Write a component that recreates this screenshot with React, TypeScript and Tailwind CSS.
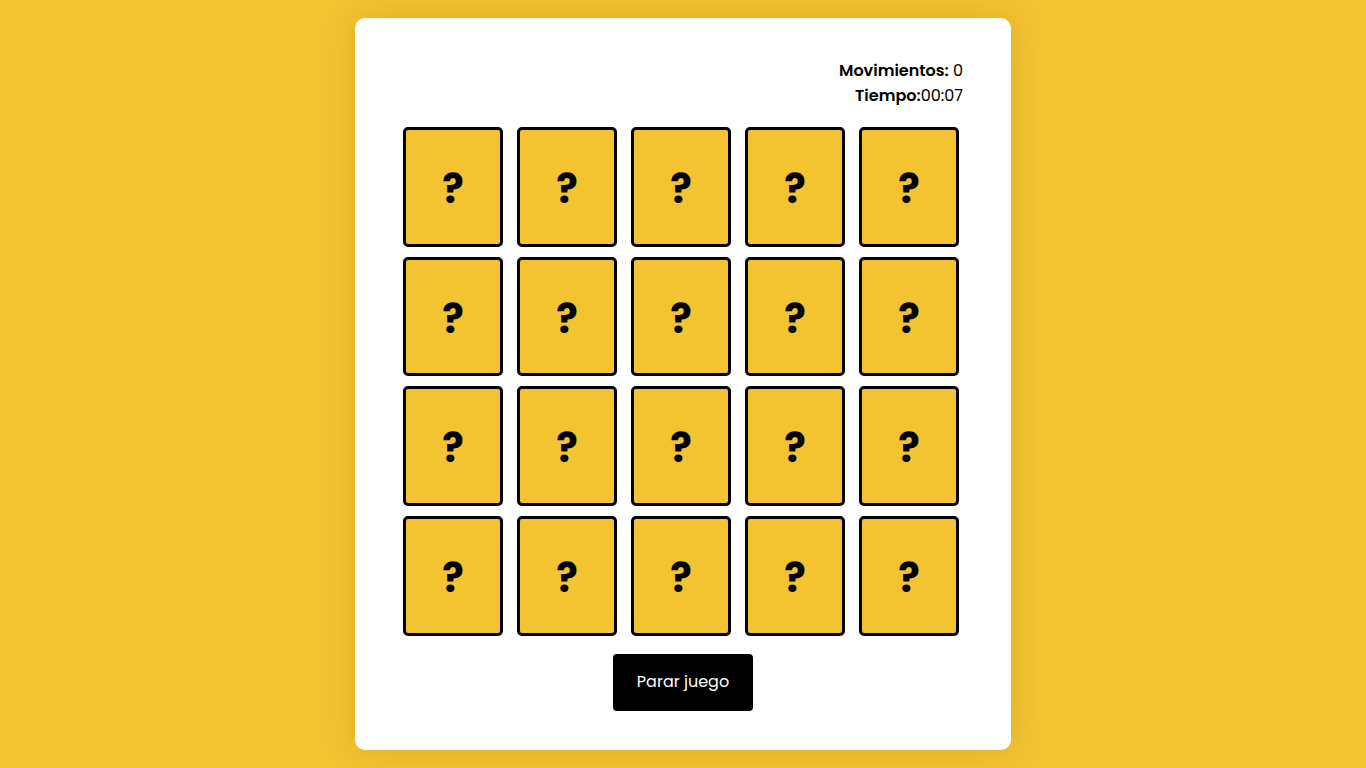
import { useState } from "react";

const cards = Array.from({ length: 20 }, (_, i) => i);

export default function App() {
  const [moves] = useState(0);
  const [time] = useState("00:07");

  return (
    <div className="min-h-screen w-full bg-[#f3c331] flex items-center justify-center font-['Poppins','Noto_Sans',sans-serif]">
      <div className="w-[656px] h-[732px] bg-white rounded-[10px] shadow-[0_0_30px_rgba(150,110,0,0.25)] px-12 pt-[40px] pb-[39px] flex flex-col">
        {/* ---- Stats ---- */}
        <div className="flex flex-col items-end text-[16px] leading-[25px] text-black">
          <p>
            <span className="font-semibold">Movimientos:</span> {moves}
          </p>
          <p>
            <span className="font-semibold">Tiempo:</span>
            {time}
          </p>
        </div>

        <div className="mt-[19px] grid grid-cols-[repeat(5,100px)] grid-rows-[repeat(4,119.7px)] gap-x-[14px] gap-y-[10px]">
          {cards.map((c) => (
            <div
              key={c}
              className="bg-[#f3c331] border-[3px] border-black rounded-[5px] flex items-center justify-center"
            >
              <span className="text-[40px] font-bold leading-none text-black pt-[4px]">?</span>
            </div>
          ))}
        </div>

        <div className="mt-[18px] flex justify-center">
          <button className="w-[140px] h-[57px] bg-black text-white rounded-[4px] text-[16px]">
            Parar juego
          </button>
        </div>
      </div>
    </div>
  );
}
